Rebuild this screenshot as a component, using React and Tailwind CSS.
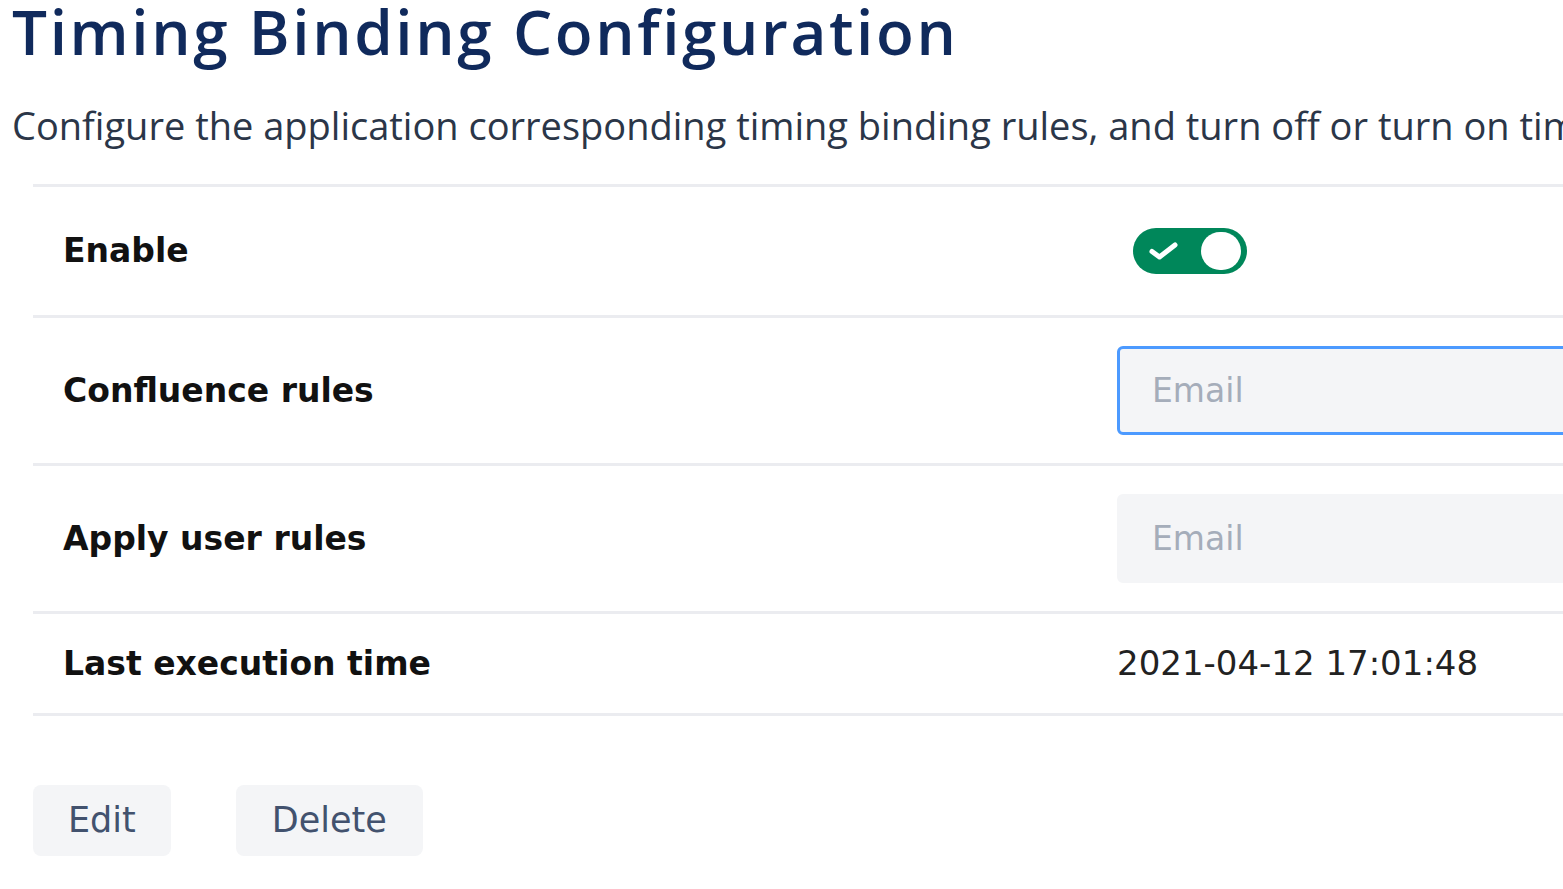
import { useState } from "react";

const rows = [
  { label: "Confluence rules", focused: true },
  { label: "Apply user rules", focused: false },
];

export default function App() {
  const [enabled, setEnabled] = useState(true);
  const [confluence, setConfluence] = useState("");
  const [userRules, setUserRules] = useState("");

  const values = [confluence, userRules];
  const setters = [setConfluence, setUserRules];

  return (
    <div className="w-[1563px] h-[889px] overflow-hidden bg-white">
      <div className="w-[2400px]">
        <h1
          className="pl-[12px] text-[62px] leading-[62px] font-semibold tracking-[2.6px] text-[#102a5c] whitespace-nowrap"
          style={{ fontFamily: '"Open Sans", "Noto Sans", sans-serif' }}
        >
          Timing Binding Configuration
        </h1>
        <p
          className="pl-[12px] mt-[40px] text-[38px] leading-[46px] text-[#2b3648] whitespace-nowrap"
          style={{ fontFamily: '"Open Sans", "Noto Sans", sans-serif' }}
        >
          Configure the application corresponding timing binding rules, and turn off or turn on timing binding
        </p>

        <div
          className="ml-[33px] mt-[36px] border-t-[3px] border-[#ebecf0]"
          style={{ fontFamily: '"DejaVu Sans", Verdana, sans-serif' }}
        >
          <div className="flex items-center h-[131px] border-b-[3px] border-[#ebecf0]">
            <div className="w-[1084px] pl-[30px] text-[33px] font-bold text-[#111]">Enable</div>
            <button
              type="button"
              onClick={() => setEnabled(!enabled)}
              className={`ml-[16px] flex items-center w-[114px] h-[46px] rounded-full p-[4px] ${
                enabled ? "bg-[#00875a] justify-between" : "bg-[#a5adba] justify-start"
              }`}
            >
              {enabled && (
                <svg width="30" height="18" viewBox="0 0 30 18" className="ml-[12px]">
                  <path
                    d="M3 9.5 L10.5 15 L26 3"
                    fill="none"
                    stroke="white"
                    strokeWidth="5"
                    strokeLinecap="round"
                    strokeLinejoin="round"
                  />
                </svg>
              )}
              <span className="block w-[40px] h-[38px] rounded-full bg-white mr-[2px]" />
            </button>
          </div>

          {rows.map((r, i) => (
            <div key={r.label} className="flex items-center h-[148px] border-b-[3px] border-[#ebecf0]">
              <div className="w-[1084px] pl-[30px] text-[33px] font-bold text-[#111]">{r.label}</div>
              <input
                type="text"
                value={values[i]}
                onChange={(e) => setters[i](e.target.value)}
                placeholder="Email"
                className={`w-[900px] h-[89px] rounded-[6px] bg-[#f4f5f7] px-[32px] text-[33px] text-[#172b4d] placeholder:text-[#a5adba] outline-none ${
                  r.focused ? "border-[3px] border-[#4c9aff]" : "border-[3px] border-[#f4f5f7]"
                }`}
              />
            </div>
          ))}

          <div className="flex items-center h-[102px] border-b-[3px] border-[#ebecf0]">
            <div className="w-[1084px] pl-[30px] text-[33px] font-bold text-[#111]">Last execution time</div>
            <div className="text-[34px] text-[#222]">2021-04-12 17:01:48</div>
          </div>

          <div className="flex gap-[65px] mt-[69px]">
            <button
              type="button"
              className="h-[71px] px-[35px] rounded-[8px] bg-[#f4f5f7] text-[35px] text-[#42526e]"
            >
              Edit
            </button>
            <button
              type="button"
              className="h-[71px] px-[36px] rounded-[8px] bg-[#f4f5f7] text-[35px] text-[#42526e]"
            >
              Delete
            </button>
          </div>
        </div>
      </div>
    </div>
  );
}
